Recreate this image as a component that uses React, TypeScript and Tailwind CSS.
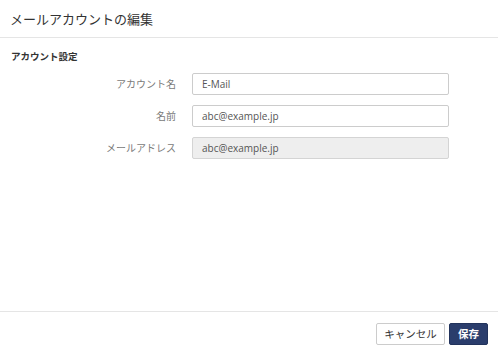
import React from "react";

function Row({ label, value, disabled }: { label: string; value: string; disabled?: boolean }) {
  return (
    <div className="flex items-center h-[22px]">
      <div className="w-[176px] text-right text-[10px] text-[#7a7a7a] leading-none font-['Noto_Sans_CJK_JP',sans-serif]">
        {label}
      </div>
      <div
        className={`ml-[16px] w-[257px] h-[22px] border rounded-[2px] flex items-center pl-[9px] text-[10px] text-[#555] font-['Open_Sans','Noto_Sans_CJK_JP',sans-serif] ${
          disabled ? "bg-[#eeeeee] border-[#d4d4d4]" : "bg-white border-[#cccccc]"
        }`}
      >
        {value}
      </div>
    </div>
  );
}

export default function App() {
  return (
    <div className="w-[500px] h-[358px] bg-white flex flex-col font-['Noto_Sans_CJK_JP',sans-serif]">
      <div className="w-[498px] h-[38px] border-b border-[#e5e5e5] flex items-center pl-[10px] shrink-0">
        <span className="text-[13px] text-[#333] leading-none">メールアカウントの編集</span>
      </div>
      <div className="flex-1 flex flex-col">
        <div className="pl-[11px] pt-[14px] text-[9.5px] font-bold text-[#333] leading-none h-[35px]">
          アカウント設定
        </div>
        <div className="flex flex-col gap-[10px]">
          <Row label="アカウント名" value="E-Mail" />
          <Row label="名前" value="abc@example.jp" />
          <Row label="メールアドレス" value="abc@example.jp" disabled />
        </div>
      </div>
      <div className="w-[498px] h-[47px] border-t border-[#e5e5e5] flex items-start justify-end pt-[11px] pr-[10px] gap-[4px] shrink-0">
        <button className="h-[22px] w-[69px] border border-[#cccccc] rounded-[2px] bg-white text-[10.5px] text-[#333] flex items-center justify-center">
          キャンセル
        </button>
        <button className="h-[22px] w-[39px] rounded-[2px] bg-[#2a3d6c] border border-[#22335c] text-[10.5px] font-bold text-white flex items-center justify-center">
          保存
        </button>
      </div>
    </div>
  );
}
